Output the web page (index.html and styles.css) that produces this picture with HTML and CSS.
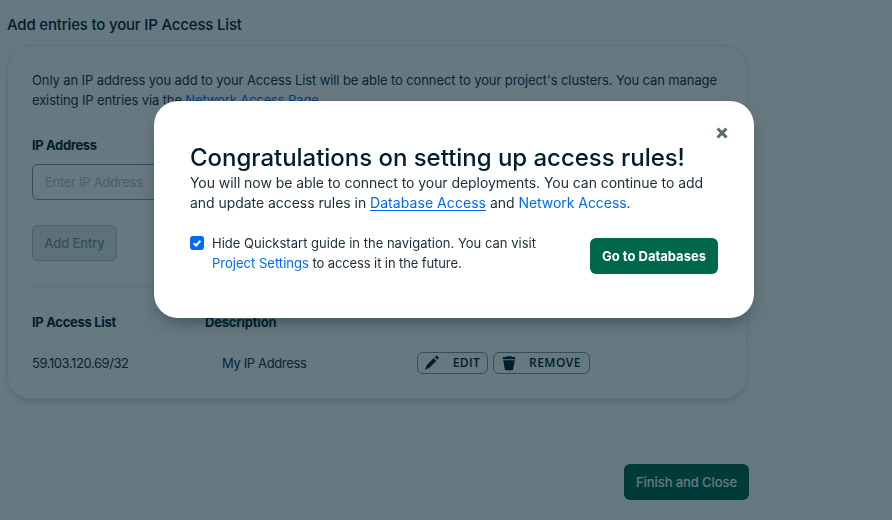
FILE: index.html
```html
<!DOCTYPE html>
<html lang="en">
<head>
<meta charset="utf-8">
<title>IP Access List</title>
<link rel="stylesheet" href="styles.css">
</head>
<body>
<main class="page">
  <h2 class="page-title">Add entries to your IP Access List</h2>
  <section class="card">
    <p class="intro"><span class="intro-first">Only an IP address you add to your Access List will be able to connect to your project's clusters. You can manage</span><br><span class="intro-second">existing IP entries via the <a class="link">Network Access Page</a>.</span></p>
    <div class="label">IP Address</div>
    <div class="input">Enter IP Address</div>
    <button class="button button-disabled">Add Entry</button>
    <hr class="divider">
    <div class="row row-head"><span>IP Access List</span><span class="head-desc">Description</span></div>
    <div class="row row-entry">
      <span class="ip">59.103.120.69/32</span>
      <span class="desc">My IP Address</span>
      <div class="actions">
        <button class="small-button edit"><svg class="icon" viewBox="0 0 16 16"><path d="M9.8 3 12.5 5.7 5.4 12.8 1 14.7 2.9 10.1ZM10.9 2 12.2 .8Q12.8.3 13.4.9L14.6 2.1Q15.2 2.8 14.7 3.4L13.5 4.6Z"/></svg><span>EDIT</span></button>
        <button class="small-button remove"><svg class="icon" viewBox="0 0 16 16"><path d="M5.6 1.2H10.4L11 2H13.4Q14.2 2 14.2 2.8V4.2H1.8V2.8Q1.8 2 2.6 2H5ZM2.2 5.2H13.8L12.2 14Q12 15.2 10.8 15.2H5.2Q4 15.2 3.8 14Z"/></svg><span>REMOVE</span></button>
      </div>
    </div>
  </section>
  <div class="footer"><button class="button button-primary finish">Finish and Close</button></div>
</main>
<div class="overlay">
  <div class="modal">
    <svg class="close" viewBox="0 0 12 12"><path d="M2.6 2.6 9.4 9.4M9.4 2.6 2.6 9.4"/></svg>
    <h1 class="modal-title">Congratulations on setting up access rules!</h1>
    <p class="modal-text">You will now be able to connect to your deployments. You can continue to add<br><span class="modal-second">and update access rules in <a class="link link-hover">Database Access</a> and <a class="link">Network Access</a>.</span></p>
    <div class="modal-bottom">
      <span class="checkbox"><svg viewBox="0 0 14 14"><path d="M3.7 7.2 6.1 9.5 10.4 4.8"/></svg></span>
      <p class="check-text">Hide Quickstart guide in the navigation. You can visit<br><a class="link">Project Settings</a><span class="check-rest"> to access it in the future.</span></p>
      <button class="button button-primary go">Go to Databases</button>
    </div>
  </div>
</div>
</body>
</html>
```
FILE: styles.css
```css
* { box-sizing: border-box; }
body {
  margin: 0;
  height: 520px;
  overflow: hidden;
  background: #fff;
  color: #1c2d38;
  font: 400 13px/20px Inter, sans-serif;
}
h1, h2, p { margin: 0; }
button { font: inherit; margin: 0; }

.page { width: 749px; padding-left: 7px; }
.page-title {
  padding-top: 15px;
  font-size: 15px;
  font-weight: 500;
  letter-spacing: -0.18px;
  color: #001e2b;
}
.card {
  width: 740px;
  height: 354px;
  margin-top: 10px;
  padding: 24px;
  border: 1px solid #e8edeb;
  border-radius: 24px;
  box-shadow: 0 4px 10px -4px rgba(0, 30, 43, 0.3);
}
.intro { white-space: nowrap; }
.intro-first { letter-spacing: -0.102px; }
.intro-second { letter-spacing: -0.13px; }
.link { color: #016bf8; }
.label {
  margin-top: 25px;
  font-weight: 700;
  letter-spacing: -0.36px;
  color: #001e2b;
}
.input {
  width: 340px;
  height: 36px;
  margin-top: 9px;
  padding: 8px 12px;
  border: 1px solid #889397;
  border-radius: 6px;
  line-height: 18px;
  letter-spacing: -0.27px;
  color: #b8c4c2;
}
.button {
  display: block;
  height: 36px;
  padding: 0;
  border: 0;
  border-radius: 6px;
  text-align: center;
  white-space: nowrap;
}
.button-disabled {
  width: 85px;
  margin-top: 25px;
  border: 1px solid #c1c7c6;
  background: #e8edeb;
  color: #889397;
  font-weight: 500;
  letter-spacing: -0.12px;
}
.divider {
  height: 1px;
  margin: 25px 0;
  border: 0;
  background: #e8edeb;
}
.row { display: flex; align-items: center; white-space: nowrap; }
.row-head {
  height: 20px;
  font-weight: 700;
  letter-spacing: -0.3px;
  color: #001e2b;
}
.row-head span:first-child { width: 173px; }
.head-desc { letter-spacing: -0.2px; }
.row-entry { height: 22px; margin-top: 20px; }
.ip { width: 190px; letter-spacing: -0.43px; }
.desc { width: 195px; letter-spacing: -0.36px; }
.actions { display: flex; gap: 5px; }
.small-button {
  display: flex;
  align-items: center;
  height: 22px;
  padding: 0 7px;
  border: 1px solid #889397;
  border-radius: 6px;
  background: none;
  color: #001e2b;
  font: 600 12px/20px "Open Sans", sans-serif;
  letter-spacing: 0.5px;
}
.edit { width: 71px; padding-left: 6px; letter-spacing: 0.3px; }
.remove { width: 97px; }
.icon { width: 16px; height: 16px; fill: #001e2b; }
.edit span { margin-left: 13px; }
.remove span { margin-left: 12px; }
.footer { display: flex; justify-content: flex-end; margin-top: 65px; }
.button-primary { background: #00684a; color: #fff; }
.finish { width: 125px; font-weight: 500; letter-spacing: -0.09px; }

.overlay {
  position: fixed;
  inset: 0;
  padding: 101px 0 0 154px;
  background: rgba(0, 30, 43, 0.6);
}
.modal {
  position: relative;
  width: 600px;
  height: 217px;
  padding: 42px 36px 0;
  border-radius: 24px;
  background: #fff;
  box-shadow: 0 8px 20px -8px rgba(0, 30, 43, 0.6);
}
.close {
  position: absolute;
  top: 26px;
  right: 26px;
  width: 12px;
  height: 12px;
  fill: none;
  stroke: #5c6c75;
  stroke-width: 3;
  stroke-linecap: square;
}
.modal-title {
  font-size: 24px;
  line-height: 30px;
  font-weight: 500;
  letter-spacing: -0.03px;
  white-space: nowrap;
  color: #001e2b;
}
.modal-text {
  font-size: 14px;
  letter-spacing: -0.055px;
  white-space: nowrap;
}
.modal-second { letter-spacing: -0.045px; }
.link-hover {
  letter-spacing: 0.06px;
  text-decoration: underline;
  text-decoration-thickness: 1px;
  text-underline-offset: 2px;
}
.modal-bottom { display: flex; margin-top: 20px; }
.checkbox {
  width: 14px;
  height: 14px;
  margin: 3px 8px 0 0;
  border-radius: 3px;
  background: #016bf8;
}
.checkbox svg {
  display: block;
  fill: none;
  stroke: #fff;
  stroke-width: 2;
}
.check-text { width: 378px; white-space: nowrap; letter-spacing: 0.015px; }
.check-rest { letter-spacing: -0.1px; }
.go { width: 128px; margin-top: 5px; font-weight: 700; }
```
